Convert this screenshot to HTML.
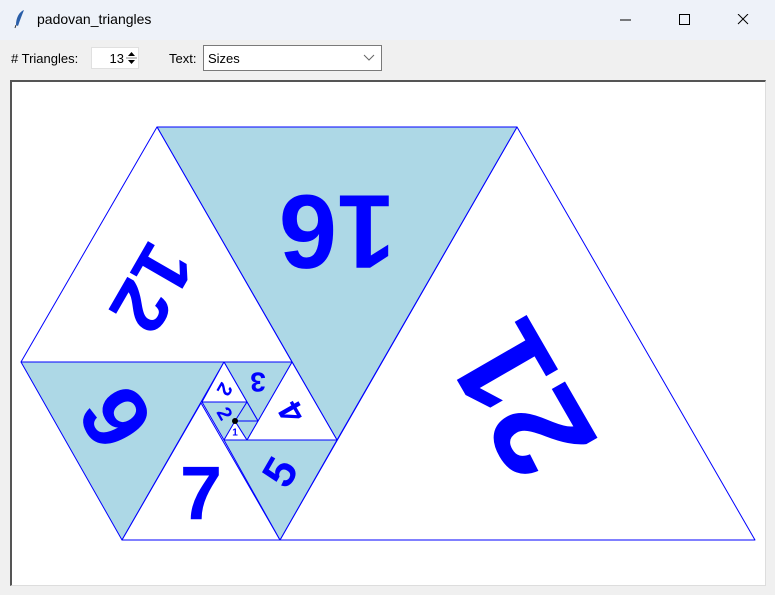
<!DOCTYPE html>
<html><head><style>
body{margin:0;width:775px;height:595px;background:#f0f0f0;font-family:"Liberation Sans",sans-serif;overflow:hidden;position:relative}
.title{position:absolute;left:0;top:0;width:775px;height:40px;background:#eef2f9;}
.title span{position:absolute;left:37px;top:11px;font-size:14px;color:#000}
.tb{position:absolute;font-size:13px;color:#000}
.box{position:absolute;background:#fff;border:1px solid #7a7a7a;font-size:13px}
.canvas{position:absolute;left:10px;top:80px;width:753px;height:503px;background:#fff;border-top:2px solid #555;border-left:2px solid #555;border-right:1px solid #ddd;border-bottom:1px solid #ddd}
svg text{font-family:"Liberation Sans",Arial,sans-serif;font-weight:bold}
</style></head><body>
<div class="title"><svg style="position:absolute;left:13px;top:9px" width="14" height="20"><path d="M11 1 C6 3 3 9 3 16 L5 17 C7 11 9 6 11 1Z" fill="#2a5ea8"/><path d="M3 16 L2 19" stroke="#333" stroke-width="1"/></svg><span>padovan_triangles</span>
<svg style="position:absolute;left:620px;top:14px" width="140" height="14"><line x1="0" y1="6" x2="11" y2="6" stroke="#000"/><rect x="59.5" y="0.5" width="10" height="10" fill="none" stroke="#000"/><path d="M118 0 L128 10 M128 0 L118 10" stroke="#000"/></svg></div>
<div class="tb" style="left:11px;top:51px"># Triangles:</div>
<div class="box" style="left:91px;top:47px;width:46px;height:20px;border-color:#e0e0e0"><span style="position:absolute;right:14px;top:3px">13</span>
<svg style="position:absolute;right:1px;top:2px" width="11" height="16"><path d="M2 6 L5.5 2 L9 6Z M2 10 L5.5 14 L9 10Z" fill="#000"/><line x1="0" y1="8" x2="11" y2="8" stroke="#888"/></svg></div>
<div class="tb" style="left:169px;top:51px">Text:</div>
<div class="box" style="left:203px;top:45px;width:177px;height:24px"><span style="position:absolute;left:4px;top:5px">Sizes</span>
<svg style="position:absolute;right:6px;top:8px" width="12" height="8"><path d="M1 1 L6 6 L11 1" fill="none" stroke="#666"/></svg></div>
<div class="canvas"></div>
<svg style="position:absolute;left:0;top:0" width="775" height="595" fill="#0000ff" text-anchor="middle" dominant-baseline="central">
<g stroke="#0000ff" stroke-width="1" stroke-linejoin="round">
<polygon points="517,127 755,540 280,540" fill="#fff"/>
<polygon points="157,127 517,127 337,440" fill="#add8e6"/>
<polygon points="157,127 21,362 292,362" fill="#fff"/>
<polygon points="21,362 224,362 122,540" fill="#add8e6"/>
<polygon points="122,540 280,540 201,403" fill="#fff"/>
<polygon points="224,440 337,440 280,540" fill="#add8e6"/>
<polygon points="247,440 337,440 292,362" fill="#fff"/>
<polygon points="224,362 292,362 258,421" fill="#add8e6"/>
<polygon points="202,402 247,402 224,362" fill="#fff"/>
<polygon points="202,402 247,402 224,440" fill="#add8e6"/>
<polygon points="224,440 247,440 235,421" fill="#fff"/>
<polygon points="235,421 247,402 258,421" fill="#add8e6"/>
<polygon points="247,440 258,421 235,421" fill="#add8e6"/>
</g>
<circle cx="235" cy="421" r="3" fill="#000"/>
<text x="522" y="400" font-size="135" transform="rotate(240 522 400)">21</text>
<text x="337" y="231" font-size="105" transform="rotate(180 337 231)">16</text>
<text x="152" y="288" font-size="78" transform="rotate(120 152 288)">12</text>
<text x="115" y="418" font-size="92" transform="rotate(60 115 418)">9</text>
<text x="201" y="494" font-size="76">7</text>
<text x="280" y="472" font-size="45" transform="rotate(-60 280 472)">5</text>
<text x="292" y="412" font-size="34" transform="rotate(-120 292 412)">4</text>
<text x="258" y="382" font-size="28" transform="rotate(180 258 382)">3</text>
<text x="224" y="389" font-size="20" transform="rotate(120 224 389)">2</text>
<text x="224" y="414" font-size="20" transform="rotate(60 224 414)">2</text>
<text x="235" y="433" font-size="10">1</text>
</svg>
</body></html>
